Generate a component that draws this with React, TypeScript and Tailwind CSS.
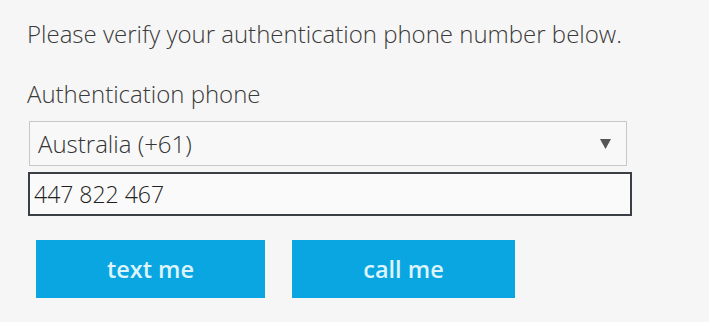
import React from 'react'

const App: React.FC = () => {
    return (
        <div className="w-[722px] h-[330px] bg-white" style={{ fontFamily: '"Open Sans", "Noto Sans", sans-serif' }}>
            <div className="w-[709px] h-[322px] bg-[#f6f6f6] pl-[27px] pt-[18px]">
                <p className="text-[24px] leading-[32px] font-light text-[#3a3a3a]">Please verify your authentication phone number below.</p>
                <p className="mt-[28px] text-[24px] leading-[32px] font-light text-[#3a3a3a]">Authentication phone</p>

                <div className="mt-[11px] ml-[2px] w-[598px] h-[45px] border border-[#c8c8c8] bg-[#f8f8f8] flex items-center justify-between pl-[8px] pr-[15px]">
                    <span className="text-[24px] font-light text-[#333]">Australia (+61)</span>
                    <svg width="11" height="10" viewBox="0 0 11 10">
                        <path d="M0 0 H11 L5.5 10 Z" fill="#555" />
                    </svg>
                </div>

                <div className="mt-[6px] ml-[1px] w-[604px] h-[44px] border-2 border-[#3a3f45] bg-[#fafafa] flex items-center pl-[4px]">
                    <span className="text-[23px] font-light text-[#222]">447 822 467</span>
                </div>

                <div className="mt-[24px] ml-[9px] flex gap-[27px]">
                    <button className="w-[229px] h-[58px] bg-[#0aa6e2] text-[#dcf4fc] text-[23.5px] font-semibold pt-[2px]">text me</button>
                    <button className="w-[223px] h-[58px] bg-[#0aa6e2] text-[#dcf4fc] text-[23.5px] font-semibold pt-[2px]">call me</button>
                </div>
            </div>
        </div>
    )
}

export default App
